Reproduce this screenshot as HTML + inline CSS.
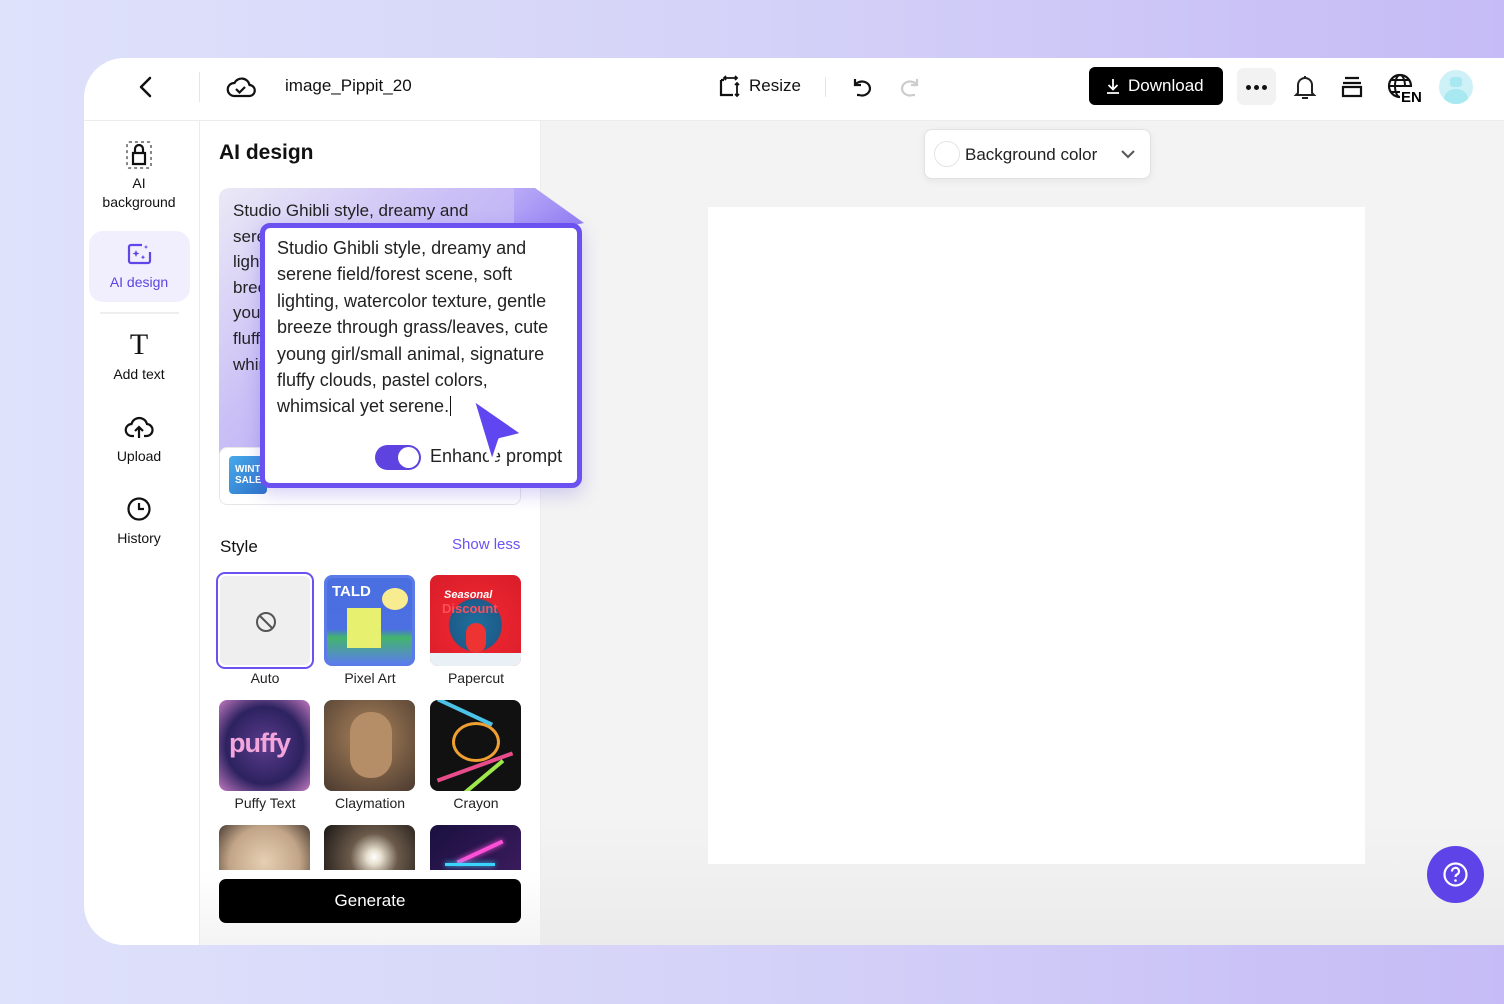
<!DOCTYPE html>
<html><head><meta charset="utf-8"><style>
*{margin:0;padding:0;box-sizing:border-box}
body{width:1504px;height:1004px;overflow:hidden;position:relative;font-family:"Liberation Sans",sans-serif;color:#111;background:linear-gradient(90deg,#dfe2fb 0%,#d4d2f8 50%,#c6bbf6 100%)}
.a{position:absolute}
.win{left:84px;top:58px;width:1420px;height:887px;background:#fff;border-radius:40px 0 0 40px;overflow:hidden}
.t{font-size:17px}
.side .it{position:absolute;left:0;width:110px;text-align:center;font-size:14px;color:#111}
.thumb{position:absolute;width:91px;height:91px;border-radius:8px;overflow:hidden}
.lab{position:absolute;width:100px;text-align:center;font-size:14px;color:#222}
</style></head><body>
<div class="a win">
 <div class="a" style="left:0;top:62px;width:1420px;height:1px;background:#ececec"></div>
 <svg class="a" style="left:54px;top:18px" width="16" height="22" viewBox="0 0 16 22"><path d="M12 2L3 11l9 9" fill="none" stroke="#111" stroke-width="2.5" stroke-linecap="round" stroke-linejoin="round"/></svg>
 <div class="a" style="left:115px;top:14px;width:1px;height:30px;background:#e5e5e5"></div>
 <svg class="a" style="left:142px;top:16px" width="30" height="26" viewBox="0 0 30 26"><path d="M8 22h15a5.5 5.5 0 0 0 .5-11A8 8 0 0 0 8.5 9 6.5 6.5 0 0 0 8 22z" fill="none" stroke="#111" stroke-width="2.2"/><path d="M10 15l3.5 3.5L19 13" fill="none" stroke="#111" stroke-width="2.2"/></svg>
 <div class="a t" style="left:201px;top:18px;width:127px;overflow:hidden;white-space:nowrap">image_Pippit_2025</div>
 <svg class="a" style="left:634px;top:17px" width="24" height="24" viewBox="0 0 24 24"><path d="M3 5v15h12M3 5h3M6 2v0" fill="none" stroke="#111" stroke-width="2.2"/><path d="M6 3h13M19 3v0M17 1l2 2-2 2M8 1L6 3l2 2M19 8v13M17 10l2-2 2 2M17 19l2 2 2-2" fill="none" stroke="#111" stroke-width="1.8"/></svg>
 <div class="a t" style="left:665px;top:18px">Resize</div>
 <div class="a" style="left:741px;top:19px;width:1px;height:20px;background:#e5e5e5"></div>
 <svg class="a" style="left:766px;top:17px" width="24" height="24" viewBox="0 0 24 24"><path d="M5 4v6h6" fill="none" stroke="#111" stroke-width="2.2"/><path d="M5 10a8 7 0 1 1 4 10H7" fill="none" stroke="#111" stroke-width="2.2"/></svg>
 <svg class="a" style="left:814px;top:17px" width="24" height="24" viewBox="0 0 24 24"><path d="M19 4v6h-6" fill="none" stroke="#ccc" stroke-width="2.2"/><path d="M19 10a8 7 0 1 0-4 10h2" fill="none" stroke="#ccc" stroke-width="2.2"/></svg>
 <div class="a" style="left:1005px;top:9px;width:134px;height:38px;background:#000;border-radius:6px;color:#fff;font-size:17px;line-height:38px;padding-left:39px">Download</div>
 <svg class="a" style="left:1020px;top:19px" width="18" height="18" viewBox="0 0 18 18"><path d="M9 2v10M4.5 8L9 12.5 13.5 8M3 16h12" fill="none" stroke="#fff" stroke-width="1.8"/></svg>
 <div class="a" style="left:1153px;top:10px;width:39px;height:37px;background:#f2f2f2;border-radius:7px"><div class="a" style="left:9px;top:17px;width:5px;height:5px;border-radius:50%;background:#111;box-shadow:8px 0 #111,16px 0 #111"></div></div>
 <svg class="a" style="left:1208px;top:15px" width="26" height="28" viewBox="0 0 26 28"><path d="M6 20V12a7 7 0 0 1 14 0v8l2 2H4z" fill="none" stroke="#222" stroke-width="2"/><path d="M10 25h6" stroke="#222" stroke-width="2"/><path d="M13 3v2" stroke="#222" stroke-width="2"/></svg>
 <svg class="a" style="left:1256px;top:17px" width="24" height="24" viewBox="0 0 24 24"><path d="M5 3h14M3 8h18M3 12h18v9H3z" fill="none" stroke="#111" stroke-width="2.2"/></svg>
 <svg class="a" style="left:1302px;top:14px" width="36" height="32" viewBox="0 0 36 32"><circle cx="14" cy="14" r="11" fill="none" stroke="#111" stroke-width="2.2"/><ellipse cx="14" cy="14" rx="5" ry="11" fill="none" stroke="#111" stroke-width="2"/><path d="M3 14h22M5 8h18M5 20h10" stroke="#111" stroke-width="2"/><rect x="14" y="15" width="22" height="17" fill="#fff"/><text x="15" y="30" font-family="Liberation Sans" font-weight="bold" font-size="15">EN</text></svg>
 <div class="a" style="left:1355px;top:12px;width:34px;height:34px;border-radius:50%;background:#cdf1f7;overflow:hidden"><div class="a" style="left:5px;top:19px;width:24px;height:20px;border-radius:50%;background:#a7e8f1"></div><div class="a" style="left:11px;top:7px;width:12px;height:10px;border-radius:3px;background:#a7e8f1"></div></div>

 <div class="a side" style="left:0;top:63px;width:116px;height:824px;border-right:1px solid #ececec">
  <svg class="a" style="left:41px;top:19px" width="28" height="30" viewBox="0 0 28 30"><rect x="2" y="2" width="24" height="26" rx="2" fill="none" stroke="#888" stroke-width="2" stroke-dasharray="3 3"/><path d="M8 24V13h12v11zM10 13V9a4 4 0 0 1 8 0v4" fill="none" stroke="#111" stroke-width="2.2"/></svg>
  <div class="it" style="top:53px;line-height:19px">AI<br>background</div>
  <div class="a" style="left:5px;top:110px;width:101px;height:71px;border-radius:14px;background:#f1effe"></div>
  <svg class="a" style="left:43px;top:122px" width="25" height="22" viewBox="0 0 25 22"><path d="M15 2H4a2 2 0 0 0-2 2v14a2 2 0 0 0 2 2h17a2 2 0 0 0 2-2V9" fill="none" stroke="#6046e8" stroke-width="2.2"/><path d="M9 7l1 2.5 2.5 1-2.5 1L9 14l-1-2.5-2.5-1 2.5-1zM16 12l.7 1.5 1.5.7-1.5.7L16 16.5l-.7-1.6-1.5-.7 1.5-.7zM19 2l.6 1.4L21 4l-1.4.6L19 6l-.6-1.4L17 4l1.4-.6z" fill="#6046e8"/></svg>
  <div class="it" style="top:153px;color:#5b45e0">AI design</div>
  <div class="a" style="left:16px;top:191px;width:79px;height:2px;background:#eee"></div>
  <div class="it" style="top:207px;font-family:'Liberation Serif',serif;font-size:30px">T</div>
  <div class="it" style="top:245px">Add text</div>
  <svg class="a" style="left:40px;top:293px" width="30" height="26" viewBox="0 0 30 26"><path d="M10 22H8a6 6 0 0 1-.5-12A8 8 0 0 1 23 10a6 6 0 0 1-1 12h-2" fill="none" stroke="#111" stroke-width="2.2"/><path d="M15 24V13M11 17l4-4 4 4" fill="none" stroke="#111" stroke-width="2.2"/></svg>
  <div class="it" style="top:327px">Upload</div>
  <svg class="a" style="left:42px;top:375px" width="26" height="26" viewBox="0 0 26 26"><circle cx="13" cy="13" r="10.5" fill="none" stroke="#111" stroke-width="2.2"/><path d="M13 7v6h5" fill="none" stroke="#111" stroke-width="2.2"/></svg>
  <div class="it" style="top:409px">History</div>
 </div>

 <div class="a" style="left:116px;top:63px;width:341px;height:824px;background:#fff;border-right:1px solid #ececec;overflow:hidden">
  <div class="a" style="left:19px;top:20px;font-size:21px;font-weight:bold">AI design</div>
  <div class="a" style="left:19px;top:67px;width:302px;height:290px;border-radius:10px 0 10px 10px;background:linear-gradient(135deg,#ebe9f6 0%,#cbc0f6 40%,#a996f5 100%)"></div>
  <div class="a" style="left:19px;top:326px;width:302px;height:58px;border:1px solid #e6e6e6;border-radius:8px;background:#fff"></div>
  <div class="a" style="left:29px;top:335px;width:38px;height:38px;border-radius:4px;background:linear-gradient(135deg,#47a9ea,#2e73c9);color:#fff;font-size:10px;font-weight:bold;line-height:11px;padding:8px 0 0 6px">WINTER<br>SALE</div>
  <div class="a" style="left:33px;top:77px;width:60px;overflow:hidden;font-size:17px;line-height:25.6px;color:#222;white-space:nowrap">&nbsp;<br>serene<br>lighting<br>breeze<br>young<br>fluffy<br>whims</div>
  <div class="a" style="left:33px;top:77px;font-size:17px;line-height:25.6px;color:#222">Studio Ghibli style, dreamy and</div>
  <div class="a" style="left:20px;top:416px;font-size:17px">Style</div>
  <div class="a" style="left:252px;top:415px;font-size:15px;color:#6b52f0">Show less</div>
  <div class="a" style="left:16px;top:451px;width:98px;height:97px;border:2px solid #6b52f0;border-radius:9px;padding:2px"><div style="width:100%;height:100%;background:#efefef;border-radius:6px;position:relative"><svg class="a" style="left:35px;top:35px" width="22" height="22" viewBox="0 0 22 22"><circle cx="11" cy="11" r="9" fill="none" stroke="#555" stroke-width="2"/><path d="M4.5 4.5l13 13" stroke="#555" stroke-width="2"/></svg></div></div>
  <div class="thumb" style="left:124px;top:454px;background:linear-gradient(180deg,#4a6fe0 0%,#4c6fe2 60%,#43b56b 70%,#5a7ee8 100%);border:3px solid #5b7be8"><div class="a" style="left:20px;top:30px;width:34px;height:40px;background:#e8f070"></div><div class="a" style="left:5px;top:5px;color:#fff;font-weight:bold;font-size:15px">TALD</div><div class="a" style="left:55px;top:10px;width:26px;height:22px;border-radius:50%;background:#f8ec90"></div></div>
  <div class="thumb" style="left:230px;top:454px;background:radial-gradient(circle at 50% 55%,#1e6f9e 0%,#1d5c8a 38%,#e8242e 40%,#d81d2a 100%)"><div class="a" style="left:14px;top:14px;color:#fff;font-weight:bold;font-size:11px;font-style:italic">Seasonal</div><div class="a" style="left:12px;top:26px;color:#ff4d5a;font-weight:bold;font-size:13px">Discount</div><div class="a" style="left:36px;top:48px;width:20px;height:30px;border-radius:10px;background:#e33"></div><div class="a" style="left:0;top:78px;width:91px;height:13px;background:#e9f0f6"></div></div>
  <div class="lab" style="left:15px;top:549px">Auto</div>
  <div class="lab" style="left:120px;top:549px">Pixel Art</div>
  <div class="lab" style="left:226px;top:549px">Papercut</div>
  <div class="thumb" style="left:19px;top:579px;background:radial-gradient(circle at 50% 50%,#5b3c8c 0%,#2d2260 60%,#c27ac0 100%)"><div class="a" style="left:10px;top:28px;color:#f3a6dc;font-weight:bold;font-size:27px;letter-spacing:-1px">puffy</div></div>
  <div class="thumb" style="left:124px;top:579px;background:radial-gradient(circle at 50% 40%,#a88260 0%,#8a6a4c 35%,#4a3a30 100%)"><div class="a" style="left:26px;top:12px;width:42px;height:66px;border-radius:20px;background:#b58d66"></div></div>
  <div class="thumb" style="left:230px;top:579px;background:#111"><div class="a" style="left:22px;top:22px;width:48px;height:40px;border:3px solid #f0a030;border-radius:50%"></div><div class="a" style="left:5px;top:65px;width:80px;height:4px;background:#e84c8a;transform:rotate(-20deg)"></div><div class="a" style="left:5px;top:10px;width:60px;height:4px;background:#4cc2e8;transform:rotate(25deg)"></div><div class="a" style="left:20px;top:78px;width:60px;height:4px;background:#9ee84c;transform:rotate(-40deg)"></div></div>
  <div class="lab" style="left:15px;top:674px">Puffy Text</div>
  <div class="lab" style="left:120px;top:674px">Claymation</div>
  <div class="lab" style="left:226px;top:674px">Crayon</div>
  <div class="thumb" style="left:19px;top:704px;height:46px;border-radius:8px 8px 0 0;background:radial-gradient(circle at 50% 80%,#e6cfb3,#c2a588 60%,#4a3d33 100%)"></div>
  <div class="thumb" style="left:124px;top:704px;height:46px;border-radius:8px 8px 0 0;background:radial-gradient(circle at 55% 70%,#fff 0%,#e8e0d0 12%,#6b5a4a 40%,#1b1715 100%)"></div>
  <div class="thumb" style="left:230px;top:704px;height:46px;border-radius:8px 8px 0 0;background:linear-gradient(135deg,#1a1040,#3a1b5c);"><div class="a" style="left:25px;top:25px;width:50px;height:4px;background:#ff4fd8;box-shadow:0 0 6px #ff4fd8;transform:rotate(-25deg)"></div><div class="a" style="left:15px;top:38px;width:50px;height:3px;background:#3ad4ff;box-shadow:0 0 6px #3ad4ff"></div></div>
  <div class="a" style="left:0;top:749px;width:340px;height:75px;background:linear-gradient(#fff,#f4f4f4)"></div>
  <div class="a" style="left:19px;top:758px;width:302px;height:44px;background:#000;border-radius:7px;color:#fff;font-size:17px;text-align:center;line-height:44px">Generate</div>
 </div>

 <div class="a" style="left:457px;top:63px;width:963px;height:824px;background:linear-gradient(180deg,#f3f3f3 85%,#ebebeb 100%)"></div>
 <div class="a" style="left:624px;top:149px;width:657px;height:657px;background:#fff"></div>
 <div class="a" style="left:840px;top:71px;width:227px;height:50px;background:#fff;border:1px solid #e2e2e2;border-radius:8px;box-shadow:0 2px 8px rgba(0,0,0,.06)"></div>
 <div class="a" style="left:850px;top:83px;width:26px;height:26px;border-radius:50%;border:1px solid #e4e4e4;background:#fff"></div>
 <div class="a t" style="left:881px;top:87px;color:#222">Background color</div>
 <svg class="a" style="left:1036px;top:90px" width="16" height="12" viewBox="0 0 16 12"><path d="M2 3l6 6 6-6" fill="none" stroke="#555" stroke-width="2"/></svg>
 <div class="a" style="left:1343px;top:788px;width:57px;height:57px;border-radius:50%;background:#5e43e8"></div>
 <svg class="a" style="left:1357px;top:802px" width="29" height="29" viewBox="0 0 29 29"><circle cx="14.5" cy="14.5" r="11" fill="none" stroke="#fff" stroke-width="2.2"/><path d="M11 11.5a3.5 3.5 0 1 1 5 3c-1 .6-1.5 1.3-1.5 2.5" fill="none" stroke="#fff" stroke-width="2.2"/><circle cx="14.5" cy="20.5" r="1.3" fill="#fff"/></svg>
</div>

<div class="a" style="left:514px;top:188px;width:70px;height:50px;background:linear-gradient(135deg,#b9abf7,#8e78f2);clip-path:polygon(0 0,30% 0,100% 70%,0 100%)"></div>
<div class="a" style="left:260px;top:223px;width:322px;height:265px;background:#fff;border:5px solid #6b52f0;border-radius:10px;box-shadow:0 6px 18px rgba(90,70,220,.25)"></div>
<div class="a" style="left:277px;top:235px;font-size:18px;line-height:26.4px;color:#222;width:300px">Studio Ghibli style, dreamy and<br>serene field/forest scene, soft<br>lighting, watercolor texture, gentle<br>breeze through grass/leaves, cute<br>young girl/small animal, signature<br>fluffy clouds, pastel colors,<br>whimsical yet serene.<span style="border-left:1.5px solid #111;margin-left:1px"></span></div>
<div class="a" style="left:375px;top:445px;width:46px;height:25px;border-radius:13px;background:#5e43e0"></div>
<div class="a" style="left:398px;top:447px;width:21px;height:21px;border-radius:50%;background:#fff"></div>
<div class="a" style="left:430px;top:446px;font-size:18px;color:#222">Enhance prompt</div>
<svg class="a" style="left:462px;top:390px" width="70" height="80" viewBox="0 0 70 80"><path d="M10 8L62 44 38 50 30 74z" fill="#6046f0" stroke="#fff" stroke-width="4" stroke-linejoin="round"/></svg>
</body></html>
